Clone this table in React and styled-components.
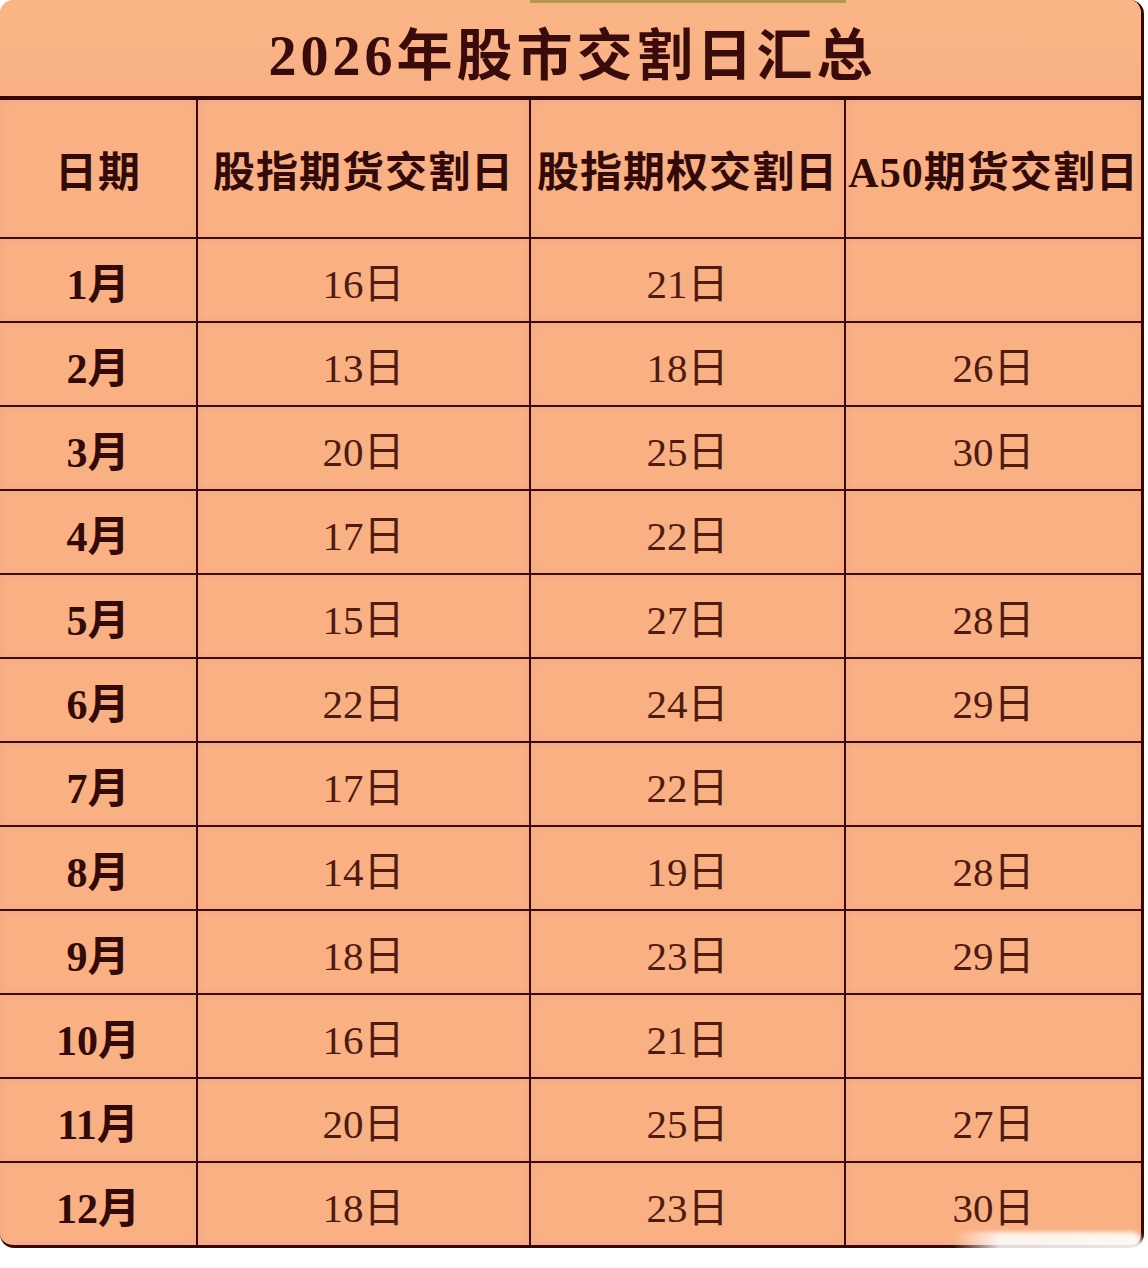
import React from 'react';
import styled, { createGlobalStyle } from 'styled-components';

const GlobalStyle = createGlobalStyle`
  html, body {
    margin: 0;
    padding: 0;
    background: #ffffff;
  }
`;

const Page = styled.div`
  width: 1148px;
  height: 1268px;
  background: #ffffff;
  position: relative;
`;

const Card = styled.div`
  position: relative;
  width: 1144px;
  background: #f9b183;
  border-radius: 14px;
  border-right: 3px solid #330806;
  border-bottom: 3px solid #330806;
  overflow: hidden;
  box-sizing: border-box;
`;

// yellowish strip at the very top, left over from the original crop
const TopStrip = styled.div`
  position: absolute;
  left: 530px;
  top: 0;
  width: 316px;
  height: 3px;
  background: #b39a4c;
`;

const Title = styled.h1`
  margin: 0;
  height: 96px;
  display: flex;
  align-items: center;
  justify-content: center;
  padding-left: 4px;
  padding-top: 4px;
  box-sizing: border-box;
  font-family: "Liberation Serif", "Noto Sans CJK SC", serif;
  font-size: 56px;
  font-weight: 700;
  letter-spacing: 4px;
  color: #3a0b0b;
  background: linear-gradient(180deg, #fab586 0%, #f8b084 100%);
`;

const Table = styled.table`
  width: 100%;
  border-collapse: collapse;
  table-layout: fixed;
  border-top: 4px solid #330806;
`;

const Cell = styled.td`
  height: ${p => (p.$head ? '137px' : '82px')};
  padding: 0;
  text-align: center;
  vertical-align: middle;
  border-bottom: 2px solid #3a0c08;
  border-left: ${p => (p.$first ? 'none' : '2px solid #3a0c08')};
  box-shadow: inset 0 0 7px rgba(242, 150, 150, 0.55);
  color: ${p => (p.$bold ? '#330a0a' : '#4e1a12')};
  font-family: "Liberation Serif", "Noto Sans CJK SC", serif;
  font-size: ${p => (p.$head ? '42px' : p.$bold ? '42px' : '41px')};
  font-weight: ${p => (p.$bold ? 700 : 400)};
  white-space: nowrap;
  letter-spacing: ${p => (p.$head ? '1px' : '0')};
  tr:last-child > & {
    border-bottom: none;
  }
`;

const Watermark = styled.div`
  position: absolute;
  right: 6px;
  top: 1232px;
  width: 190px;
  height: 24px;
  border-radius: 10px;
  background: linear-gradient(90deg, rgba(255,255,255,0) 0%, rgba(255,255,255,0.85) 25%, rgba(255,255,255,0.9) 100%);
  filter: blur(2px);
`;

const rows = [
  ['1月', '16日', '21日', ''],
  ['2月', '13日', '18日', '26日'],
  ['3月', '20日', '25日', '30日'],
  ['4月', '17日', '22日', ''],
  ['5月', '15日', '27日', '28日'],
  ['6月', '22日', '24日', '29日'],
  ['7月', '17日', '22日', ''],
  ['8月', '14日', '19日', '28日'],
  ['9月', '18日', '23日', '29日'],
  ['10月', '16日', '21日', ''],
  ['11月', '20日', '25日', '27日'],
  ['12月', '18日', '23日', '30日'],
];

const heads = ['日期', '股指期货交割日', '股指期权交割日', 'A50期货交割日'];
const widths = ['197px', '333px', '315px', 'auto'];

export default function App() {
  return (
    <Page>
      <GlobalStyle />
      <Card>
        <TopStrip />
        <Title>2026年股市交割日汇总</Title>
        <Table>
          <colgroup>
            {widths.map((w, i) => <col key={i} style={{ width: w }} />)}
          </colgroup>
          <tbody>
            <tr>
              {heads.map((h, i) => (
                <Cell key={h} $head $bold $first={i === 0}>{h}</Cell>
              ))}
            </tr>
            {rows.map(r => (
              <tr key={r[0]}>
                {r.map((v, i) => (
                  <Cell key={i} $first={i === 0} $bold={i === 0}>{v}</Cell>
                ))}
              </tr>
            ))}
          </tbody>
        </Table>
      </Card>
      <Watermark />
    </Page>
  );
}
